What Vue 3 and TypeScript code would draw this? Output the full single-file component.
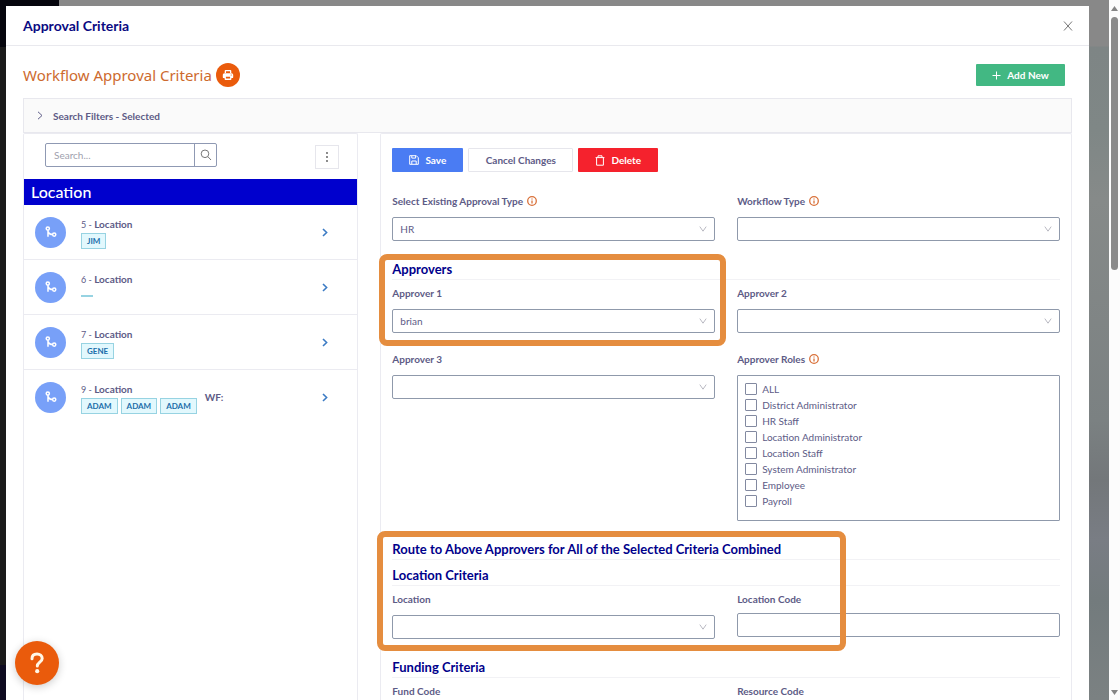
<script setup lang="ts">
import { ref } from 'vue'

interface Criteria {
  id: number
  name: string
  tags: string[]
  workflow?: boolean
}

const rows: Criteria[] = [
  { id: 5, name: 'Location', tags: ['JIM'] },
  { id: 6, name: 'Location', tags: [] },
  { id: 7, name: 'Location', tags: ['GENE'] },
  { id: 9, name: 'Location', tags: ['ADAM', 'ADAM', 'ADAM'], workflow: true },
]

const roles = ref([
  { name: 'ALL', checked: false },
  { name: 'District Administrator', checked: false },
  { name: 'HR Staff', checked: false },
  { name: 'Location Administrator', checked: false },
  { name: 'Location Staff', checked: false },
  { name: 'System Administrator', checked: false },
  { name: 'Employee', checked: false },
  { name: 'Payroll', checked: false },
])

const search = ref('')
const approvalType = ref('HR')
const workflowType = ref('')
const approver1 = ref('brian')
const approver2 = ref('')
const approver3 = ref('')
const location = ref('')
const locationCode = ref('')
const fundCode = ref('')
const resourceCode = ref('')
</script>

<template>
  <div class="page">
    <div class="page-side"></div>
    <div class="page-top"><span></span></div>

    <main class="modal">
      <header class="modal-head">
        <h1>Approval Criteria</h1>
        <button class="close" type="button" aria-label="Close">
          <svg width="10" height="10" viewBox="0 0 10 10"><path d="M1 .5l8 9M9 .5l-8 9" /></svg>
        </button>
      </header>

      <div class="modal-body">
        <div class="title-row">
          <h2>Workflow Approval Criteria</h2>
          <button class="print" type="button" aria-label="Print">
            <svg width="12" height="12" viewBox="0 0 12 12">
              <path fill="#fff" d="M3.600 1h4.800a.9.9 0 0 1 .9.9V4H2.700V1.900a.9.900 0 0 1 .9-.9zM2.400 4.200h7.200A1.600 1.600 0 0 1 11.200 5.800v2.400a.9.9 0 0 1-.9.9h-.9v1a.9.9 0 0 1-.9.9h-5a.9.9 0 0 1-.9-.9v-1h-.9a.9.9 0 0 1-.9-.9V5.800a1.600 1.600 0 0 1 1.600-1.600z" />
              <path fill="#ea5b0c" d="M4 2.200h4v1.800H4zM3.900 7.800h4.200v1.800H3.900z" />
              <circle cx="9.200" cy="6" r=".6" fill="#ea5b0c" />
            </svg>
          </button>
          <button class="btn add" type="button">
            <svg width="9" height="9" viewBox="0 0 9 9"><path d="M4.500 .5v8M.5 4.500h8" /></svg>
            Add New
          </button>
        </div>

        <button class="filters" type="button">
          <svg width="6" height="9" viewBox="0 0 6 9"><path d="M1 .8l4 3.700-4 3.700" /></svg>
          Search Filters - Selected
        </button>

        <div class="columns">
          <section class="list">
            <div class="tools">
              <div class="search">
                <input v-model="search" type="text" placeholder="Search..." aria-label="Search" />
                <button type="button" aria-label="Run search">
                  <svg width="12" height="12" viewBox="0 0 12 12"><circle cx="5" cy="4.800" r="3.800" /><path d="M7.800 7.600L11 11" /></svg>
                </button>
              </div>
              <button class="more" type="button" aria-label="More options">
                <svg width="4" height="12" viewBox="0 0 4 12"><circle cx="2" cy="2" r=".9" /><circle cx="2" cy="6" r=".9" /><circle cx="2" cy="10" r=".9" /></svg>
              </button>
            </div>
            <h3 class="group">Location</h3>
            <ul>
              <li v-for="row in rows" :key="row.id">
                <span class="avatar">
                  <svg width="14" height="14" viewBox="0 0 14 14">
                    <circle cx="3.800" cy="3.500" r="1.600" /><circle cx="10.200" cy="9.600" r="1.600" />
                    <path d="M4 5.100v6.700M4 6.400c.8 2.200 2.200 3.200 4.600 3.200" />
                  </svg>
                </span>
                <div class="info">
                  <div class="name"><span>{{ row.id }} - </span>{{ row.name }}</div>
                  <div class="tags">
                    <span v-for="(tag, i) in row.tags" :key="i" class="tag">{{ tag }}</span>
                    <span v-if="!row.tags.length" class="tag empty"></span>
                  </div>
                </div>
                <span v-if="row.workflow" class="wf">WF:</span>
                <svg class="go" width="6" height="9" viewBox="0 0 6 9"><path d="M1 1l3.600 3.500L1 8" /></svg>
              </li>
            </ul>
          </section>

          <form class="form" @submit.prevent>
            <div class="actions">
              <button class="btn save" type="button">
                <svg width="10" height="10" viewBox="0 0 10 10"><path d="M.7.7h6.600l2 2v6.600H.7zM2.800.9v2.200h3.800V.9M2.800 9.200V6h4.400v3.200" /></svg>
                Save
              </button>
              <button class="btn cancel" type="button">Cancel Changes</button>
              <button class="btn delete" type="button">
                <svg width="10" height="11" viewBox="0 0 10 11"><path d="M.6 2.600h8.800M3 2.400V.8h4v1.600M1.600 2.800v7.400h6.800V2.800" /></svg>
                Delete
              </button>
            </div>

            <div class="pair">
              <div class="field">
                <label for="type">Select Existing Approval Type
                  <svg class="hint" width="10" height="10" viewBox="0 0 10 10"><circle cx="5" cy="5" r="4.300" /><path d="M5 4.400v3M5 2.500v1" /></svg>
                </label>
                <div class="select">
                  <select id="type" v-model="approvalType"><option>HR</option></select>
                  <svg width="8" height="6" viewBox="0 0 8 6"><path d="M.8.6L4 5.200 7.200.6" /></svg>
                </div>
              </div>
              <div class="field">
                <label for="workflow">Workflow Type
                  <svg class="hint" width="10" height="10" viewBox="0 0 10 10"><circle cx="5" cy="5" r="4.300" /><path d="M5 4.400v3M5 2.500v1" /></svg>
                </label>
                <div class="select">
                  <select id="workflow" v-model="workflowType"><option></option></select>
                  <svg width="8" height="6" viewBox="0 0 8 6"><path d="M.8.6L4 5.200 7.200.6" /></svg>
                </div>
              </div>
            </div>

            <section class="block">
              <h4>Approvers</h4>
              <div class="pair">
                <div class="field">
                  <label for="approver1">Approver 1</label>
                  <div class="select">
                    <select id="approver1" v-model="approver1"><option>brian</option></select>
                    <svg width="8" height="6" viewBox="0 0 8 6"><path d="M.8.6L4 5.200 7.200.6" /></svg>
                  </div>
                </div>
                <div class="field">
                  <label for="approver2">Approver 2</label>
                  <div class="select">
                    <select id="approver2" v-model="approver2"><option></option></select>
                    <svg width="8" height="6" viewBox="0 0 8 6"><path d="M.8.6L4 5.200 7.200.6" /></svg>
                  </div>
                </div>
              </div>
              <div class="marker marker-half"></div>
            </section>

            <div class="pair">
              <div class="field">
                <label for="approver3">Approver 3</label>
                <div class="select">
                  <select id="approver3" v-model="approver3"><option></option></select>
                  <svg width="8" height="6" viewBox="0 0 8 6"><path d="M.8.6L4 5.200 7.200.6" /></svg>
                </div>
              </div>
              <div class="field" role="group" aria-labelledby="roles">
                <div id="roles" class="label">Approver Roles
                  <svg class="hint" width="10" height="10" viewBox="0 0 10 10"><circle cx="5" cy="5" r="4.300" /><path d="M5 4.400v3M5 2.500v1" /></svg>
                </div>
                <div class="roles">
                  <label v-for="role in roles" :key="role.name">
                    <input v-model="role.checked" type="checkbox" />{{ role.name }}
                  </label>
                </div>
              </div>
            </div>

            <section class="block">
              <h4>Route to Above Approvers for All of the Selected Criteria Combined</h4>
              <h4>Location Criteria</h4>
              <div class="pair">
                <div class="field">
                  <label for="location">Location</label>
                  <div class="select">
                    <select id="location" v-model="location"><option></option></select>
                    <svg width="8" height="6" viewBox="0 0 8 6"><path d="M.8.6L4 5.200 7.200.6" /></svg>
                  </div>
                </div>
                <div class="field text">
                  <label for="locationCode">Location Code</label>
                  <input id="locationCode" v-model="locationCode" type="text" />
                </div>
              </div>
              <div class="marker marker-wide"></div>
            </section>

            <section class="block">
              <h4>Funding Criteria</h4>
              <div class="pair">
                <div class="field text">
                  <label for="fund">Fund Code</label>
                  <input id="fund" v-model="fundCode" type="text" />
                </div>
                <div class="field text">
                  <label for="resource">Resource Code</label>
                  <input id="resource" v-model="resourceCode" type="text" />
                </div>
              </div>
            </section>
          </form>
        </div>
      </div>
    </main>

    <div class="scrollbar" aria-hidden="true">
      <svg width="7" height="5" viewBox="0 0 7 5"><path d="M3.500 0L7 5H0z" /></svg>
      <div class="track"><div class="thumb"></div></div>
      <svg width="7" height="5" viewBox="0 0 7 5"><path d="M0 0h7L3.500 5z" /></svg>
    </div>

    <button class="help" type="button" aria-label="Help">
      <svg width="16" height="22" viewBox="0 0 16 22">
        <path d="M3 6.800C3 3.600 5.200 2 8 2s5.200 1.700 5.200 4.400c0 3.600-4.900 3.900-4.900 7.700" />
        <circle cx="8.200" cy="19.200" r="2.100" />
      </svg>
    </button>
  </div>
</template>

<style>
body {
  margin: 0;
  overflow: hidden;
}
</style>

<style scoped>
* {
  box-sizing: border-box;
}
.page {
  position: relative;
  display: grid;
  grid-template: 6px 1fr / 6px 1fr 20px 11px;
  height: 100vh;
  overflow: hidden;
  background: linear-gradient(#888 0 46px, #7e8585 47px, #7f8786 130px, #868a89 200px, #7b8182 420px, #73777a 480px, #797d84 540px, #737b7d 600px, #7b8182);
  color: #5d5b86;
  font: 10px/16px Lato, "Noto Sans", sans-serif;
}
h1, h2, h3, h4, ul {
  margin: 0;
  padding: 0;
}
button, input, select {
  margin: 0;
  color: inherit;
  font: inherit;
}
svg {
  flex: none;
  fill: none;
  stroke: currentColor;
}
.page-side {
  grid-area: 1 / 1 / 3 / 2;
  background: linear-gradient(#05050d 0 47px, #1a1a1a 47px calc(100% - 35px), #0e0b20 calc(100% - 35px));
}
.page-top {
  grid-area: 1 / 2 / 2 / 4;
  background: #888;
}
.page-top span {
  display: block;
  width: 53px;
  height: 6px;
  background: #05050d;
}
.modal {
  grid-area: 2 / 2 / 3 / 3;
  min-width: 0;
  min-height: 0;
  display: flex;
  flex-direction: column;
  background: #fff;
}
.modal-head {
  display: flex;
  flex: none;
  align-items: center;
  justify-content: space-between;
  height: 40px;
  padding: 0 16px 0 17px;
  border-bottom: 1px solid #e9e9ee;
}
h1 {
  color: #0a0a82;
  font-size: 14px;
  font-weight: 700;
}
.close {
  display: flex;
  padding: 0;
  border: 0;
  background: none;
  color: #777;
}
.modal-body {
  display: flex;
  flex: 1;
  flex-direction: column;
  min-height: 0;
  padding: 17px 17px 0;
}
.title-row {
  display: flex;
  flex: none;
  align-items: center;
  gap: 4px;
  height: 24px;
  margin: 0 7px 11px 0;
}
h2 {
  color: #cd6a2e;
  font-family: "Noto Sans", sans-serif;
  font-size: 15px;
  font-weight: 400;
  line-height: 22px;
}
.print {
  display: flex;
  align-items: center;
  justify-content: center;
  width: 24px;
  height: 24px;
  padding: 0;
  border: 0;
  border-radius: 50%;
  background: #ea5b0c;
}
.print svg {
  stroke: none;
}
.btn {
  display: flex;
  align-items: center;
  justify-content: center;
  gap: 6px;
  height: 24px;
  padding: 0;
  border: 1px solid transparent;
  border-radius: 1px;
  color: #fff;
  font-weight: 700;
}
.add {
  width: 89px;
  height: 22px;
  margin-left: auto;
  background: #42b883;
}
.filters {
  display: flex;
  flex: none;
  align-items: center;
  gap: 10px;
  height: 35px;
  padding: 0 13px;
  border: 1px solid #e8e8ee;
  background: #fafafa;
  font-weight: 700;
}
.columns {
  display: grid;
  flex: 1;
  grid-template-columns: 335fr 691fr;
  gap: 22px;
  min-height: 0;
}
.list, .form {
  border: 1px solid #ebebf1;
  border-bottom: 0;
  border-radius: 2px 2px 0 0;
}
.tools {
  display: flex;
  align-items: center;
  justify-content: space-between;
  height: 45px;
  padding: 0 18px 0 21px;
}
.search {
  display: flex;
  width: 172px;
  height: 24px;
  margin-bottom: 4px;
  border: 1px solid #8f99b3;
  border-radius: 2px;
}
.search input {
  flex: 1;
  min-width: 0;
  padding: 0 8px;
  border: 0;
  outline: 0;
  background: none;
}
.search input::placeholder {
  color: #a09fae;
}
.search button {
  display: flex;
  align-items: center;
  justify-content: center;
  width: 22px;
  padding: 0;
  border: 0;
  border-left: 1px solid #8f99b3;
  background: none;
  color: #777;
}
.more {
  display: flex;
  align-items: center;
  justify-content: center;
  width: 24px;
  height: 24px;
  padding: 0;
  border: 1px solid #e6e6ec;
  background: #fff;
}
.more svg {
  fill: #555;
  stroke: none;
}
.group {
  padding: 0 7px;
  background: #0000cd;
  color: #fff;
  font-size: 16px;
  font-weight: 500;
  line-height: 26px;
}
ul {
  list-style: none;
}
li {
  display: flex;
  align-items: center;
  height: 55px;
  padding: 0 29px 0 11px;
  border-bottom: 1px solid #ebebf1;
}
li:last-child {
  border-bottom-color: transparent;
}
.avatar {
  display: flex;
  align-items: center;
  justify-content: center;
  width: 31px;
  height: 31px;
  margin-right: 15px;
  border-radius: 50%;
  background: #78a0f8;
  color: #fff;
}
.avatar svg {
  stroke-width: 1.5;
}
.name {
  font-weight: 700;
}
.name span {
  font-size: 9px;
  font-weight: 400;
}
.tags {
  display: flex;
  gap: 3px;
  height: 16px;
}
.tag {
  padding: 0 5px;
  border: 1px solid #97d3e2;
  background: #e2f8fd;
  color: #1b6eaa;
  font-size: 8px;
  font-weight: 700;
  line-height: 14px;
}
.empty {
  align-self: center;
  height: 2px;
}
.wf {
  margin-left: 8px;
  font-weight: 700;
}
.go {
  margin-left: auto;
  color: #3c7bc4;
  stroke-width: 1.6;
}
.form {
  padding: 14px 11px 0;
}
.actions {
  display: flex;
  gap: 5px;
  margin-bottom: 21px;
}
.save {
  width: 71px;
  background: #4a7cf3;
}
.cancel {
  width: 105px;
  border-color: #e6e6ec;
  background: #fff;
  color: #5d5b86;
}
.delete {
  width: 80px;
  background: #f5222d;
}
.pair {
  display: grid;
  grid-template-columns: 1fr 1fr;
  gap: 22px;
  margin-bottom: 18px;
}
.field {
  display: flex;
  flex-direction: column;
  gap: 8px;
}
.text {
  gap: 6px;
}
.field > label, .label {
  display: flex;
  align-items: center;
  gap: 4px;
  height: 16px;
  font-weight: 700;
}
.hint {
  color: #d9713a;
  stroke-width: 1.3;
}
.select {
  display: grid;
  align-items: center;
}
.select select, .select svg {
  grid-area: 1 / 1;
}
.select svg {
  justify-self: end;
  margin-right: 8px;
  color: #b9b9c2;
  pointer-events: none;
}
.select select, .text input {
  width: 100%;
  height: 24px;
  padding: 0 7px;
  border: 1px solid #8f99ab;
  border-radius: 2px;
  outline: 0;
  appearance: none;
  background: #fff;
}
.block {
  position: relative;
}
h4 {
  margin-bottom: 5px;
  border-bottom: 1px solid #f2f2f5;
  color: #00008b;
  font-size: 13px;
  font-weight: 700;
  line-height: 20px;
}
.roles {
  padding: 5px 7px 11px;
  border: 1px solid #8f99ab;
  border-radius: 1px;
}
.roles label {
  display: flex;
  align-items: center;
  gap: 5px;
  height: 16px;
}
.roles input {
  width: 12px;
  height: 12px;
  border: 1px solid #8289a0;
  border-radius: 1px;
  appearance: none;
}
.roles input:checked {
  background: #4a7cf3;
}
.marker {
  position: absolute;
  border: 6px solid #e58d3f;
  border-radius: 8px;
  pointer-events: none;
}
.marker-half {
  inset: -5px 50% -13px -13px;
}
.marker-wide {
  inset: -8px 32% -12px -15px;
}
.scrollbar {
  grid-area: 1 / 4 / 3 / 5;
  display: flex;
  flex-direction: column;
  align-items: center;
  gap: 6px;
  padding: 6px 0 5px;
  background: #fcfcfc;
}
.scrollbar svg {
  fill: #858585;
  stroke: none;
}
.track {
  flex: 1;
}
.thumb {
  width: 7px;
  height: 38%;
  border-radius: 4px;
  background: #8b8b8b;
}
.help {
  position: absolute;
  bottom: 15px;
  left: 15px;
  display: flex;
  align-items: center;
  justify-content: center;
  width: 44px;
  height: 44px;
  padding: 0;
  border: 0;
  border-radius: 50%;
  background: #ea5b0c;
  box-shadow: 0 2px 8px rgb(0 0 0 / 20%);
  color: #fff8e8;
}
.help svg {
  stroke-width: 3;
  stroke-linecap: round;
}
.help circle {
  fill: currentColor;
  stroke: none;
}
</style>
